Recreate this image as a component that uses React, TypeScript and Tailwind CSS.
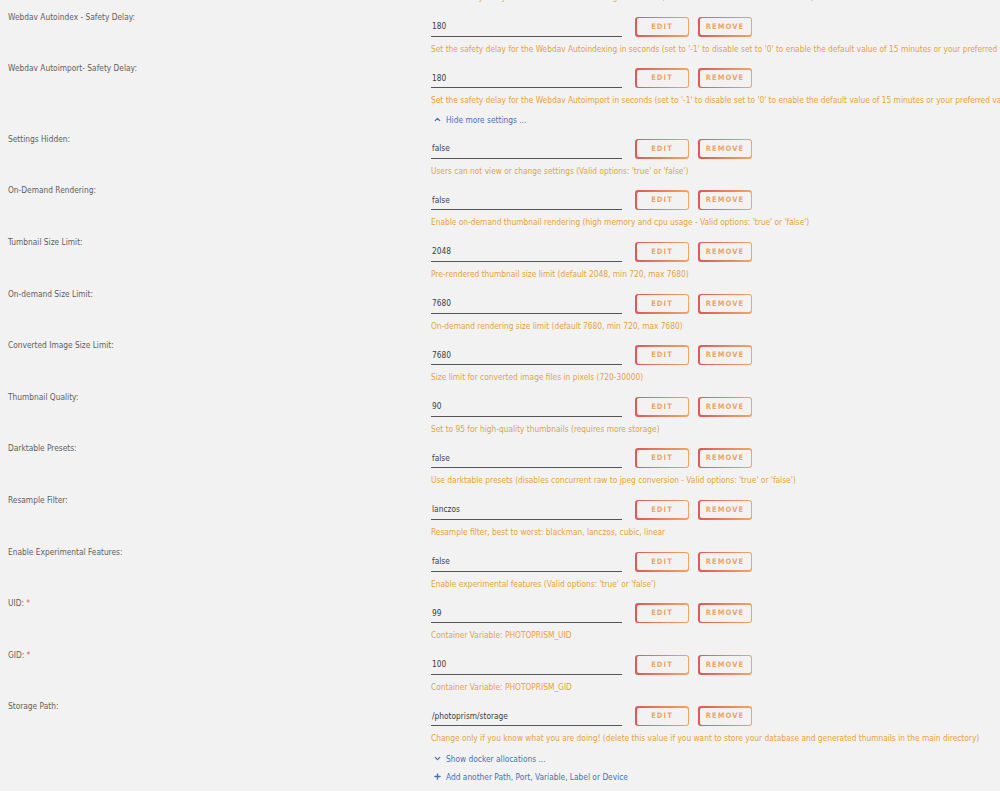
import { ChevronUp, ChevronDown, Plus } from 'lucide-react';

type Setting = {
  label: string;
  value: string;
  help: string;
  required?: boolean;
};

const topSettings: Setting[] = [
  {
    label: 'Webdav Autoindex - Safety Delay:',
    value: '180',
    help: "Set the safety delay for the Webdav Autoindexing in seconds (set to '-1' to disable set to '0' to enable the default value of 15 minutes or your preferred value)",
  },
  {
    label: 'Webdav Autoimport- Safety Delay:',
    value: '180',
    help: "Set the safety delay for the Webdav Autoimport in seconds (set to '-1' to disable set to '0' to enable the default value of 15 minutes or your preferred value)",
  },
];

const moreSettings: Setting[] = [
  { label: 'Settings Hidden:', value: 'false', help: "Users can not view or change settings (Valid options: 'true' or 'false')" },
  { label: 'On-Demand Rendering:', value: 'false', help: "Enable on-demand thumbnail rendering (high memory and cpu usage - Valid options: 'true' or 'false')" },
  { label: 'Tumbnail Size Limit:', value: '2048', help: 'Pre-rendered thumbnail size limit (default 2048, min 720, max 7680)' },
  { label: 'On-demand Size Limit:', value: '7680', help: 'On-demand rendering size limit (default 7680, min 720, max 7680)' },
  { label: 'Converted Image Size Limit:', value: '7680', help: 'Size limit for converted image files in pixels (720-30000)' },
  { label: 'Thumbnail Quality:', value: '90', help: 'Set to 95 for high-quality thumbnails (requires more storage)' },
  { label: 'Darktable Presets:', value: 'false', help: "Use darktable presets (disables concurrent raw to jpeg conversion - Valid options: 'true' or 'false')" },
  { label: 'Resample Filter:', value: 'lanczos', help: 'Resample filter, best to worst: blackman, lanczos, cubic, linear' },
  { label: 'Enable Experimental Features:', value: 'false', help: "Enable experimental features (Valid options: 'true' or 'false')" },
  { label: 'UID:', value: '99', help: 'Container Variable: PHOTOPRISM_UID', required: true },
  { label: 'GID:', value: '100', help: 'Container Variable: PHOTOPRISM_GID', required: true },
  {
    label: 'Storage Path:',
    value: '/photoprism/storage',
    help: 'Change only if you know what you are doing! (delete this value if you want to store your database and generated thumnails in the main directory)',
  },
];

function GradientButton({ children }: { children: string }) {
  return (
    <div className="rounded-[3px] bg-gradient-to-r from-[#dc5858] to-[#f4a462] p-[1.5px]">
      <div className="flex h-[17px] w-[51px] items-center justify-center rounded-[2px] bg-[#f2f2f2] text-[7.5px] font-bold tracking-[1.1px] text-[#eda468]">
        {children}
      </div>
    </div>
  );
}

function SettingRow({ s }: { s: Setting }) {
  return (
    <div className="flex pb-[7.6px]">
      <div className="w-[431px] shrink-0 pl-2 text-[#5f5f5f]">
        {s.label}
        {s.required && <span className="text-[#e05a5a]"> *</span>}
      </div>
      <div className="pt-[6px]">
        <div className="flex items-center">
          <div className="flex h-[20px] w-[191px] items-center border-b border-[#555] pl-px text-[#3d3d3d]">
            {s.value}
          </div>
          <div className="ml-[13px] flex gap-[9px]">
            <GradientButton>EDIT</GradientButton>
            <GradientButton>REMOVE</GradientButton>
          </div>
        </div>
        <div className="mt-[6px] whitespace-nowrap text-[#e6a23f]">{s.help}</div>
      </div>
    </div>
  );
}

export default function App() {
  return (
    <div
      className="h-[791px] w-[1000px] overflow-hidden bg-[#f2f2f2] pt-px text-[8.3px] leading-[12px]"
      style={{ fontFamily: "'DejaVu Sans Condensed', 'Liberation Sans', sans-serif" }}
    >
      {/* help line of the row above, cut by the window */}
      <div className="-mt-[10px] mb-[7.6px] flex">
        <div className="w-[431px] shrink-0" />
        <div className="whitespace-nowrap text-[#e6a23f]">
          Set the safety delay for the Webdav Autoindexing in seconds (set to '-1' to disable set to '0' to enable)
        </div>
      </div>

      {topSettings.map((s) => (
        <SettingRow key={s.label} s={s} />
      ))}

      <div className="mb-[7px] flex pl-[431px] text-[#4a6fb5]">
        <span className="flex items-center gap-[4px] pl-[2px]">
          <ChevronUp size={9} strokeWidth={3.5} />
          Hide more settings ...
        </span>
      </div>

      {moreSettings.map((s) => (
        <SettingRow key={s.label} s={s} />
      ))}

      <div className="mt-[1px] flex flex-col gap-[6px] pl-[431px] text-[#4a6fb5]">
        <span className="flex items-center gap-[4px] pl-[2px]">
          <ChevronDown size={9} strokeWidth={3.5} />
          Show docker allocations ...
        </span>
        <span className="flex items-center gap-[4px] pl-[2px]">
          <Plus size={9} strokeWidth={3.5} />
          Add another Path, Port, Variable, Label or Device
        </span>
      </div>
    </div>
  );
}
